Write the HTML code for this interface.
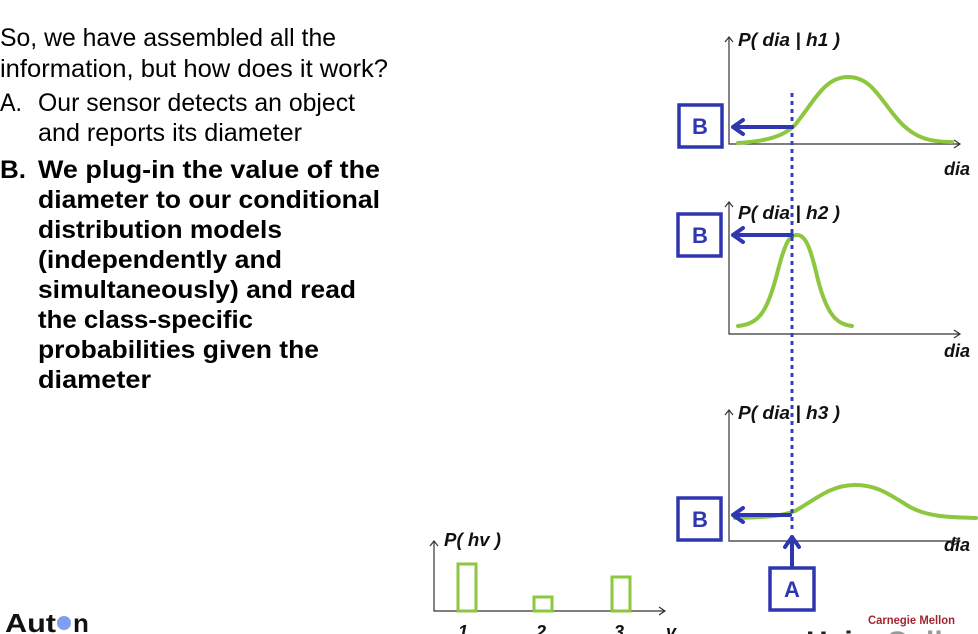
<!DOCTYPE html>
<html><head><meta charset="utf-8"><style>
html,body{margin:0;padding:0;background:#fff;width:978px;height:634px;overflow:hidden}
svg{display:block}
text{font-family:"Liberation Sans",sans-serif}
</style></head><body>
<svg width="978" height="634" viewBox="0 0 978 634" xmlns="http://www.w3.org/2000/svg">
<g font-size="25" fill="#000">
<text x="0" y="46" textLength="336" lengthAdjust="spacingAndGlyphs">So, we have assembled all the</text>
<text x="0" y="77" textLength="388" lengthAdjust="spacingAndGlyphs">information, but how does it work?</text>
<text x="0" y="111" textLength="22" lengthAdjust="spacingAndGlyphs">A.</text>
<text x="38" y="111" textLength="317" lengthAdjust="spacingAndGlyphs">Our sensor detects an object</text>
<text x="38" y="141" textLength="264" lengthAdjust="spacingAndGlyphs">and reports its diameter</text>
</g>
<g font-size="25" font-weight="bold" fill="#000">
<text x="0" y="178" textLength="26" lengthAdjust="spacingAndGlyphs">B.</text>
<text x="38" y="178" textLength="342" lengthAdjust="spacingAndGlyphs">We plug-in the value of the</text>
<text x="38" y="208" textLength="342" lengthAdjust="spacingAndGlyphs">diameter to our conditional</text>
<text x="38" y="238" textLength="244" lengthAdjust="spacingAndGlyphs">distribution models</text>
<text x="38" y="268" textLength="244" lengthAdjust="spacingAndGlyphs">(independently and</text>
<text x="38" y="298" textLength="318" lengthAdjust="spacingAndGlyphs">simultaneously) and read</text>
<text x="38" y="328" textLength="215" lengthAdjust="spacingAndGlyphs">the class-specific</text>
<text x="38" y="358" textLength="281" lengthAdjust="spacingAndGlyphs">probabilities given the</text>
<text x="38" y="388" textLength="113" lengthAdjust="spacingAndGlyphs">diameter</text>
</g>

<g stroke="#333" stroke-width="1.2" fill="none">
<path d="M729 37V144H960"/><path d="M725 42L729 37L733 42"/><path d="M954 140L960 144L954 148"/>
<path d="M729 202V334H960"/><path d="M725 207L729 202L733 207"/><path d="M954 330L960 334L954 338"/>
<path d="M729 410V541H960"/><path d="M725 415L729 410L733 415"/><path d="M954 537L960 541L954 545"/>
<path d="M434 541V611H665"/><path d="M430 546L434 541L438 546"/><path d="M659 607L665 611L659 615"/>
</g>
<g font-size="18" font-weight="bold" font-style="italic" fill="#111">
<text x="738" y="46" textLength="102" lengthAdjust="spacingAndGlyphs">P( dia | h1 )</text>
<text x="738" y="219" textLength="102" lengthAdjust="spacingAndGlyphs">P( dia | h2 )</text>
<text x="738" y="419" textLength="102" lengthAdjust="spacingAndGlyphs">P( dia | h3 )</text>
<text x="944" y="175">dia</text>
<text x="944" y="357">dia</text>
<text x="944" y="551">dia</text>
<text x="444" y="546" textLength="57" lengthAdjust="spacingAndGlyphs">P( hv )</text>
<text x="458" y="638">1</text><text x="536" y="638">2</text><text x="614" y="638">3</text><text x="666" y="638">v</text>
</g>
<g stroke="#8DC63F" stroke-width="4" fill="none" stroke-linecap="round">
<path d="M738 143C770 141 785 135 795 125C815 100 825 77 848 77C872 77 880 100 900 122C915 138 930 142 952 142"/>
<path d="M738 326C760 324 768 310 778 270C786 240 790 235 797 235C805 235 810 245 818 280C828 318 838 324 852 326"/>
<path d="M735 518C770 517 782 516 795 511C815 500 830 485 855 485C878 485 890 495 910 507C930 518 955 517 976 518"/>
</g>
<g fill="none" stroke="#8DC63F" stroke-width="3">
<rect x="458" y="564" width="18" height="47"/>
<rect x="534" y="597" width="18" height="14"/>
<rect x="612" y="577" width="18" height="34"/>
</g>
<line x1="792" y1="93" x2="792" y2="530" stroke="#3340B8" stroke-width="3" stroke-dasharray="4,4"/>
<g stroke="#2E37B0" stroke-width="3.5" fill="#fff">
<rect x="679" y="105" width="43" height="42"/>
<rect x="678" y="214" width="43" height="42"/>
<rect x="678" y="498" width="43" height="42"/>
<rect x="770" y="568" width="44" height="42"/>
</g>
<g stroke="#2E37B0" stroke-width="4" fill="none" stroke-linecap="round" stroke-linejoin="round">
<path d="M792 127H733M743 120L733 127L743 134"/>
<path d="M792 235H733M743 228L733 235L743 242"/>
<path d="M790 515H733M743 508L733 515L743 522"/>
<path d="M792 566V537M785 547L792 537L799 547"/>
</g>
<g font-size="22" font-weight="bold" fill="#2E37B0" text-anchor="middle">
<text x="700" y="134">B</text><text x="700" y="243">B</text><text x="700" y="527">B</text><text x="792" y="597">A</text>
</g>
<text x="5" y="632" font-size="26" font-weight="bold" fill="#111" textLength="51" lengthAdjust="spacingAndGlyphs">Aut</text>
<circle cx="64" cy="623" r="7" fill="#7f9ef0"/>
<text x="73" y="632" font-size="26" font-weight="bold" fill="#111">n</text>
<text x="868" y="624" font-family="Liberation Serif,serif" font-size="12" font-weight="bold" fill="#a0282e" textLength="87" lengthAdjust="spacingAndGlyphs">Carnegie Mellon</text>
<text x="806" y="652" font-size="30" font-weight="bold" fill="#222">Heinz<tspan fill="#999">College</tspan></text>
</svg>
</body></html>
